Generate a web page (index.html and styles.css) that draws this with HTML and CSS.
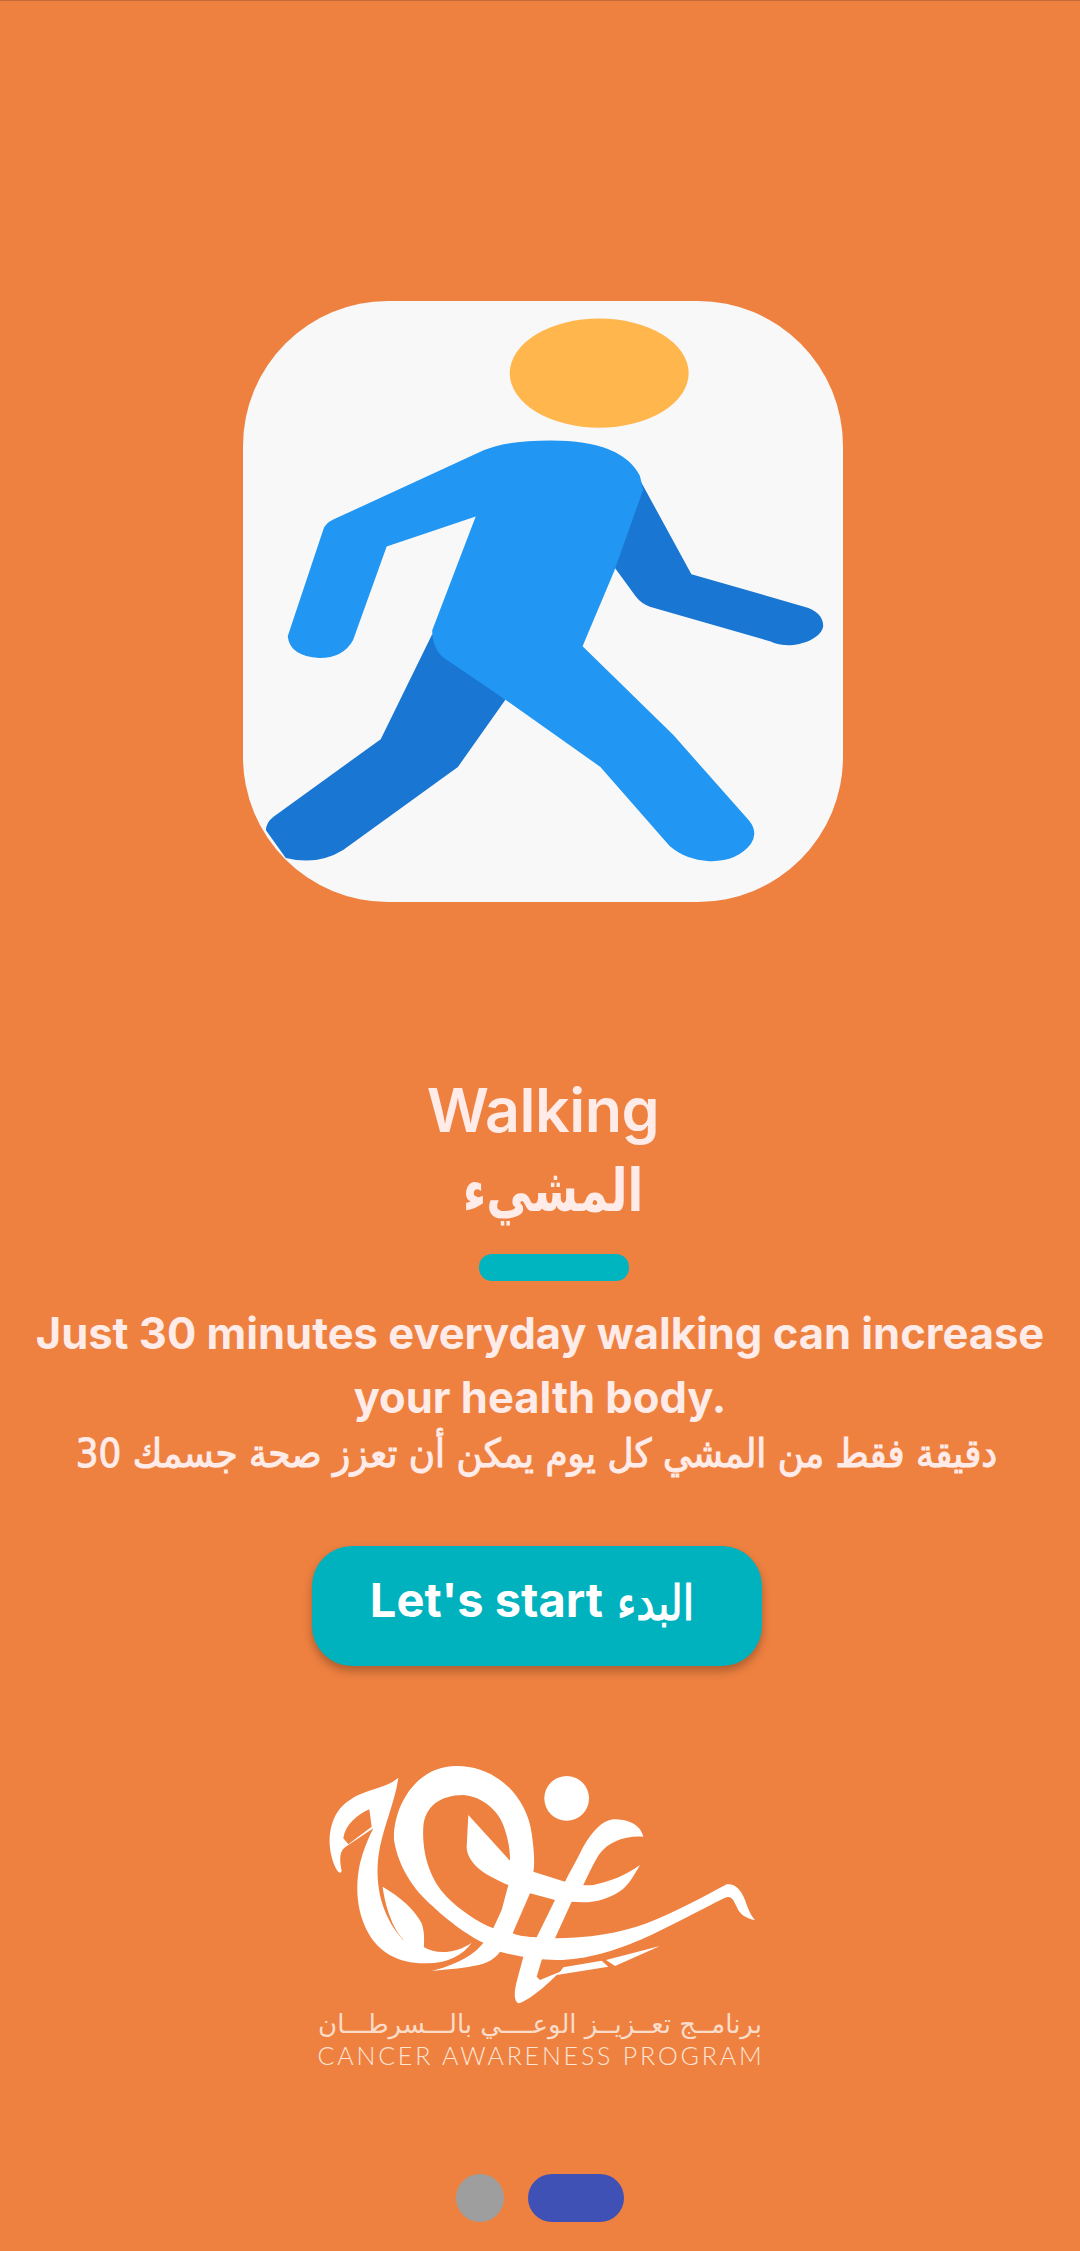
FILE: index.html
```html
<!DOCTYPE html>
<html lang="en">
<head>
<meta charset="utf-8">
<title>Walking</title>
<link rel="stylesheet" href="styles.css">
</head>
<body>
<main class="screen">
  <div class="card">
    <svg class="walker" viewBox="32 28 1516 1518" aria-hidden="true">
      <ellipse cx="932" cy="210" rx="226" ry="138" fill="#ffb74d"/>
      <path fill="#1976d2" d="M1035 480L1165 718L1450 800C1480 808 1498 825 1498 848C1495 880 1440 900 1400 897C1385 896 1375 893 1365 888L1060 800Q1038 792 1025 775L970 700Z"/>
      <path fill="#1976d2" d="M510 870L380 1135L110 1330Q90 1345 90 1365L140 1435Q220 1455 285 1415L575 1205L695 1035Z"/>
      <path fill="#2196f3" d="M640 405Q700 380 810 380Q990 380 1035 470L1043 505L970 710L890 900L1120 1125L1310 1340Q1335 1370 1315 1400Q1280 1445 1210 1443Q1150 1440 1110 1405L935 1205L695 1035L540 930Q510 905 510 860L620 572L395 648L310 885Q285 930 225 930Q150 925 145 875L235 605Q240 590 260 580Z"/>
    </svg>
  </div>

  <h1 class="title">Walking</h1>
  <p class="title-ar" lang="ar" dir="rtl">المشيء</p>
  <div class="rule"></div>
  <p class="body-en">Just 30 minutes everyday walking can increase<br>your health body.</p>
  <p class="body-ar" lang="ar" dir="rtl">دقيقة فقط من المشي كل يوم يمكن أن تعزز صحة جسمك 30</p>

  <button class="start" type="button"><span>Let's start</span> <span class="start-ar" lang="ar">البدء</span></button>

  <div class="brand">
    <svg class="logo" viewBox="0 0 1440 810" aria-hidden="true">
      <circle cx="800" cy="175" r="67"/>
      <path fill-rule="evenodd" d="M295 113C285 190 245 270 235 350C225 440 245 530 310 600L372 622C410 645 470 640 515 608C490 645 440 670 380 670C300 672 235 640 200 570C170 510 165 440 180 370C190 330 205 295 220 265L135 322C118 335 118 360 125 392Q122 404 112 392C95 365 85 320 90 280C100 220 125 190 175 165C220 145 265 140 295 113ZM208 208C170 225 135 255 130 295L145 313L215 260Z"/>
      <path d="M248 440C300 470 345 510 365 550C375 580 372 605 372 622L380 645L300 615L310 598C280 570 255 500 248 440Z"/>
      <path fill-rule="evenodd" d="M395 692C450 680 520 650 550 608C500 585 430 530 400 500C340 450 295 380 282 300C278 210 340 78 470 78C590 78 680 170 695 280C702 330 705 370 700 395L690 460L638 580C660 590 690 592 765 595C860 595 960 580 1040 550C1130 515 1210 470 1280 433C1310 430 1325 455 1335 480C1345 510 1355 530 1365 540C1340 535 1320 525 1310 500C1300 480 1295 465 1275 473C1200 510 1110 560 1020 600C950 630 860 660 770 660C720 660 650 650 600 635C585 655 565 670 520 678C480 686 430 690 395 692ZM370 260C375 200 420 165 490 165C550 170 600 215 615 270C625 300 630 330 630 360L625 435L605 510L580 565C530 545 480 510 440 470C390 420 365 340 370 260Z"/>
      <path d="M505 225L630 362C650 375 675 385 700 395L795 425C820 435 850 437 880 435C930 425 980 405 1020 375C1000 410 985 435 965 450C930 475 890 487 850 487C820 487 790 482 765 480L690 460C670 452 650 445 625 435C590 420 550 400 530 380C510 360 500 340 500 320Z"/>
      <path d="M1030 290C1020 250 980 238 940 238C900 242 865 290 840 340C825 370 810 395 795 425L765 480L710 592L670 650C660 690 650 720 645 750C643 770 645 785 655 790C680 785 730 745 770 705L925 680L905 662L790 682L780 695L720 720L710 710L725 660L765 595L815 485L850 435C870 395 885 360 900 340C925 305 980 285 1030 290Z"/>
      <path d="M918 660L945 678L1080 618Z"/>
    </svg>
    <p class="brand-ar" lang="ar" dir="rtl">برنامــج تعــزيــز الوعــــي بالـــسرطـــان</p>
    <p class="brand-en">CANCER AWARENESS PROGRAM</p>
  </div>

  <div class="dots">
    <span class="dot"></span>
    <span class="dot active"></span>
  </div>
</main>
</body>
</html>
```

FILE: styles.css
```css
* { box-sizing: border-box; margin: 0; padding: 0; }
body { background: #ee8140; }
.screen {
  width: 1080px;
  height: 2251px;
  overflow: hidden;
  display: flex;
  flex-direction: column;
  align-items: center;
  padding-top: 301px;
  background: #ee8140;
  border-top: 1px solid #c4693a;
  color: #ffebe8;
  font-family: Inter, "DejaVu Sans", sans-serif;
  text-align: center;
}
.card {
  width: 600px;
  height: 601px;
  margin-top: -1px;
  margin-left: 6px;
  flex: none;
  background: #f8f8f8;
  border-radius: 145px;
  overflow: hidden;
}
.walker { display: block; width: 100%; height: 100%; }
.title {
  margin-top: 168px;
  margin-left: 6px;
  font-size: 61px;
  line-height: 80px;
  font-weight: 600;
  letter-spacing: -0.5px;
}
.title-ar {
  margin-top: 4px;
  margin-left: 26px;
  font-family: "DejaVu Sans", sans-serif;
  font-size: 46px;
  line-height: 72px;
  font-weight: 700;
  transform: scaleY(1.3);
}
.rule {
  flex: none;
  width: 150px;
  height: 27px;
  margin-top: 28px;
  margin-left: 28px;
  border-radius: 13px;
  background: #00b4c0;
}
.body-en {
  margin-top: 20px;
  font-size: 43.5px;
  line-height: 64px;
  font-weight: 700;
  white-space: nowrap;
}
.body-ar {
  margin-right: 7px;
  font-family: "DejaVu Sans", sans-serif;
  font-size: 35.8px;
  line-height: 50px;
  font-weight: 400;
  -webkit-text-stroke: 1px #ffebe8;
  white-space: nowrap;
  transform: scaleY(1.1);
}
.start {
  flex: none;
  width: 450px;
  height: 120px;
  margin-top: 67px;
  margin-left: -6px;
  padding: 0 10px 14px 0;
  border: 0;
  border-radius: 40px;
  background: #00b2be;
  box-shadow: 0 5px 10px rgba(0, 0, 0, 0.28);
  color: #fff;
  font-family: Inter, sans-serif;
  font-size: 47px;
  font-weight: 700;
}
.start-ar {
  display: inline-block;
  margin-left: 3px;
  font-family: "DejaVu Sans", sans-serif;
  font-size: 41px;
  font-weight: 400;
  -webkit-text-stroke: 1px #fff;
  transform: scaleY(1.2);
}
.brand {
  flex: none;
  width: 480px;
  margin-top: 74px;
  display: flex;
  flex-direction: column;
  align-items: center;
}
.logo { display: block; width: 480px; height: 270px; fill: #fff; }
.brand-ar {
  width: 480px;
  margin-top: -6px;
  font-family: "DejaVu Sans", sans-serif;
  font-size: 26px;
  line-height: 40px;
  color: #fbdcc8;
  white-space: nowrap;
}
.brand-en {
  margin-top: -4px;
  margin-left: 2px;
  font-family: Lato, sans-serif;
  font-size: 25px;
  line-height: 30px;
  font-weight: 300;
  letter-spacing: 2.8px;
  color: #fde4d4;
  white-space: nowrap;
}
.dots {
  flex: none;
  display: flex;
  gap: 24px;
  margin-top: auto;
  margin-bottom: 29px;
}
.dot { width: 48px; height: 48px; border-radius: 24px; background: #9e9e9e; }
.dot.active { width: 96px; background: #3f51b5; }
```
